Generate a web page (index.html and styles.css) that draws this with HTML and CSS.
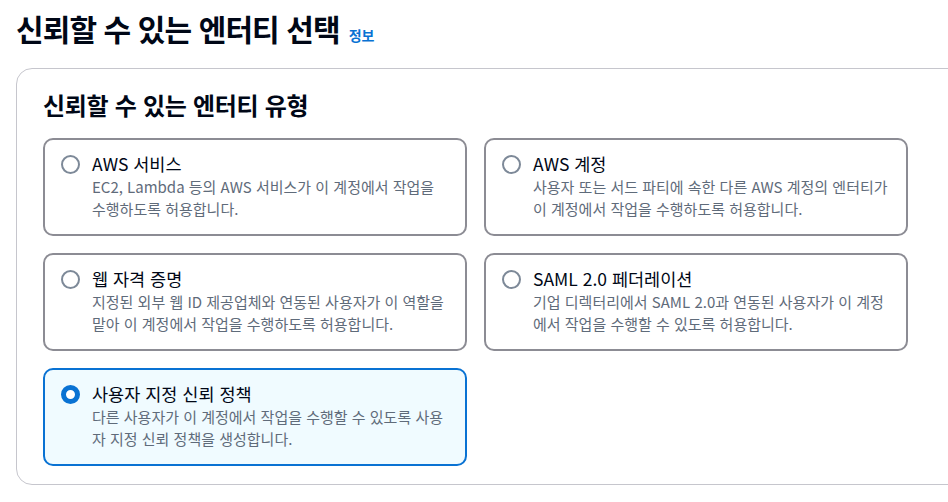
FILE: index.html
```html
<!DOCTYPE html>
<html lang="ko">
<head>
<meta charset="utf-8">
<link rel="stylesheet" href="styles.css">
</head>
<body>
<div class="page">
  <div class="page-header">
    <h1 class="title">신뢰할 수 있는 엔터티 선택</h1>
    <a class="info" href="#">정보</a>
  </div>
  <section class="card">
    <h2 class="card-title">신뢰할 수 있는 엔터티 유형</h2>
    <div class="tiles">
      <div class="tile">
        <span class="radio"></span>
        <div class="tile-text">
          <div class="tile-label">AWS 서비스</div>
          <div class="tile-desc">EC2, Lambda 등의 AWS 서비스가 이 계정에서 작업을<br>수행하도록 허용합니다.</div>
        </div>
      </div>
      <div class="tile">
        <span class="radio"></span>
        <div class="tile-text">
          <div class="tile-label">AWS 계정</div>
          <div class="tile-desc">사용자 또는 서드 파티에 속한 다른 AWS 계정의 엔터티가<br>이 계정에서 작업을 수행하도록 허용합니다.</div>
        </div>
      </div>
      <div class="tile">
        <span class="radio"></span>
        <div class="tile-text">
          <div class="tile-label">웹 자격 증명</div>
          <div class="tile-desc">지정된 외부 웹 ID 제공업체와 연동된 사용자가 이 역할을<br>맡아 이 계정에서 작업을 수행하도록 허용합니다.</div>
        </div>
      </div>
      <div class="tile">
        <span class="radio"></span>
        <div class="tile-text">
          <div class="tile-label">SAML 2.0 페더레이션</div>
          <div class="tile-desc">기업 디렉터리에서 SAML 2.0과 연동된 사용자가 이 계정<br>에서 작업을 수행할 수 있도록 허용합니다.</div>
        </div>
      </div>
      <div class="tile selected">
        <span class="radio checked"></span>
        <div class="tile-text">
          <div class="tile-label">사용자 지정 신뢰 정책</div>
          <div class="tile-desc">다른 사용자가 이 계정에서 작업을 수행할 수 있도록 사용<br>자 지정 신뢰 정책을 생성합니다.</div>
        </div>
      </div>
    </div>
  </section>
</div>
</body>
</html>
```
FILE: styles.css
```css
html, body {
  margin: 0;
  padding: 0;
  overflow: hidden;
  background: #ffffff;
}
body {
  font-family: "Noto Sans CJK KR", "Noto Sans", sans-serif;
  color: #000716;
}
.page {
  padding: 10px 0 0 16px;
  width: 948px;
  height: 502px;
  box-sizing: border-box;
  overflow: hidden;
}
.page-header {
  display: flex;
  align-items: baseline;
  gap: 9px;
}
.title {
  margin: 0;
  font-size: 30px;
  line-height: 36px;
  font-weight: 700;
  letter-spacing: -0.9px;
}
.info {
  font-size: 14px;
  font-weight: 700;
  color: #0972d3;
  text-decoration: none;
}
.card {
  margin-top: 22px;
  border: 1px solid #c6c6cd;
  border-radius: 16px;
  padding: 21px 26px 18px 26px;
  width: 960px;
  flex: none;
}
.card-title {
  margin: 0;
  font-size: 24px;
  line-height: 30px;
  font-weight: 700;
  letter-spacing: -0.3px;
}
.tiles {
  margin-top: 18px;
  display: grid;
  grid-template-columns: 424px 424px;
  column-gap: 17px;
  row-gap: 17px;
}
.tile {
  display: flex;
  align-items: flex-start;
  gap: 12px;
  border: 2px solid #8c8c94;
  border-radius: 10px;
  padding: 12px 4px 14px 16px;
  height: 98px;
  box-sizing: border-box;
}
.tile.selected {
  border-color: #0972d3;
  background: #f0fbff;
}
.radio {
  flex: none;
  width: 19px;
  height: 19px;
  box-sizing: border-box;
  border: 2px solid #7d8998;
  border-radius: 50%;
  margin-top: 3px;
  background: #fff;
}
.radio.checked {
  border: 5.5px solid #0972d3;
  background: #fff;
}
.tile-label {
  font-size: 17.5px;
  line-height: 24px;
  color: #000716;
}
.tile-desc {
  font-size: 15px;
  line-height: 22px;
  color: #5f6b7a;
  white-space: nowrap;
}
```
